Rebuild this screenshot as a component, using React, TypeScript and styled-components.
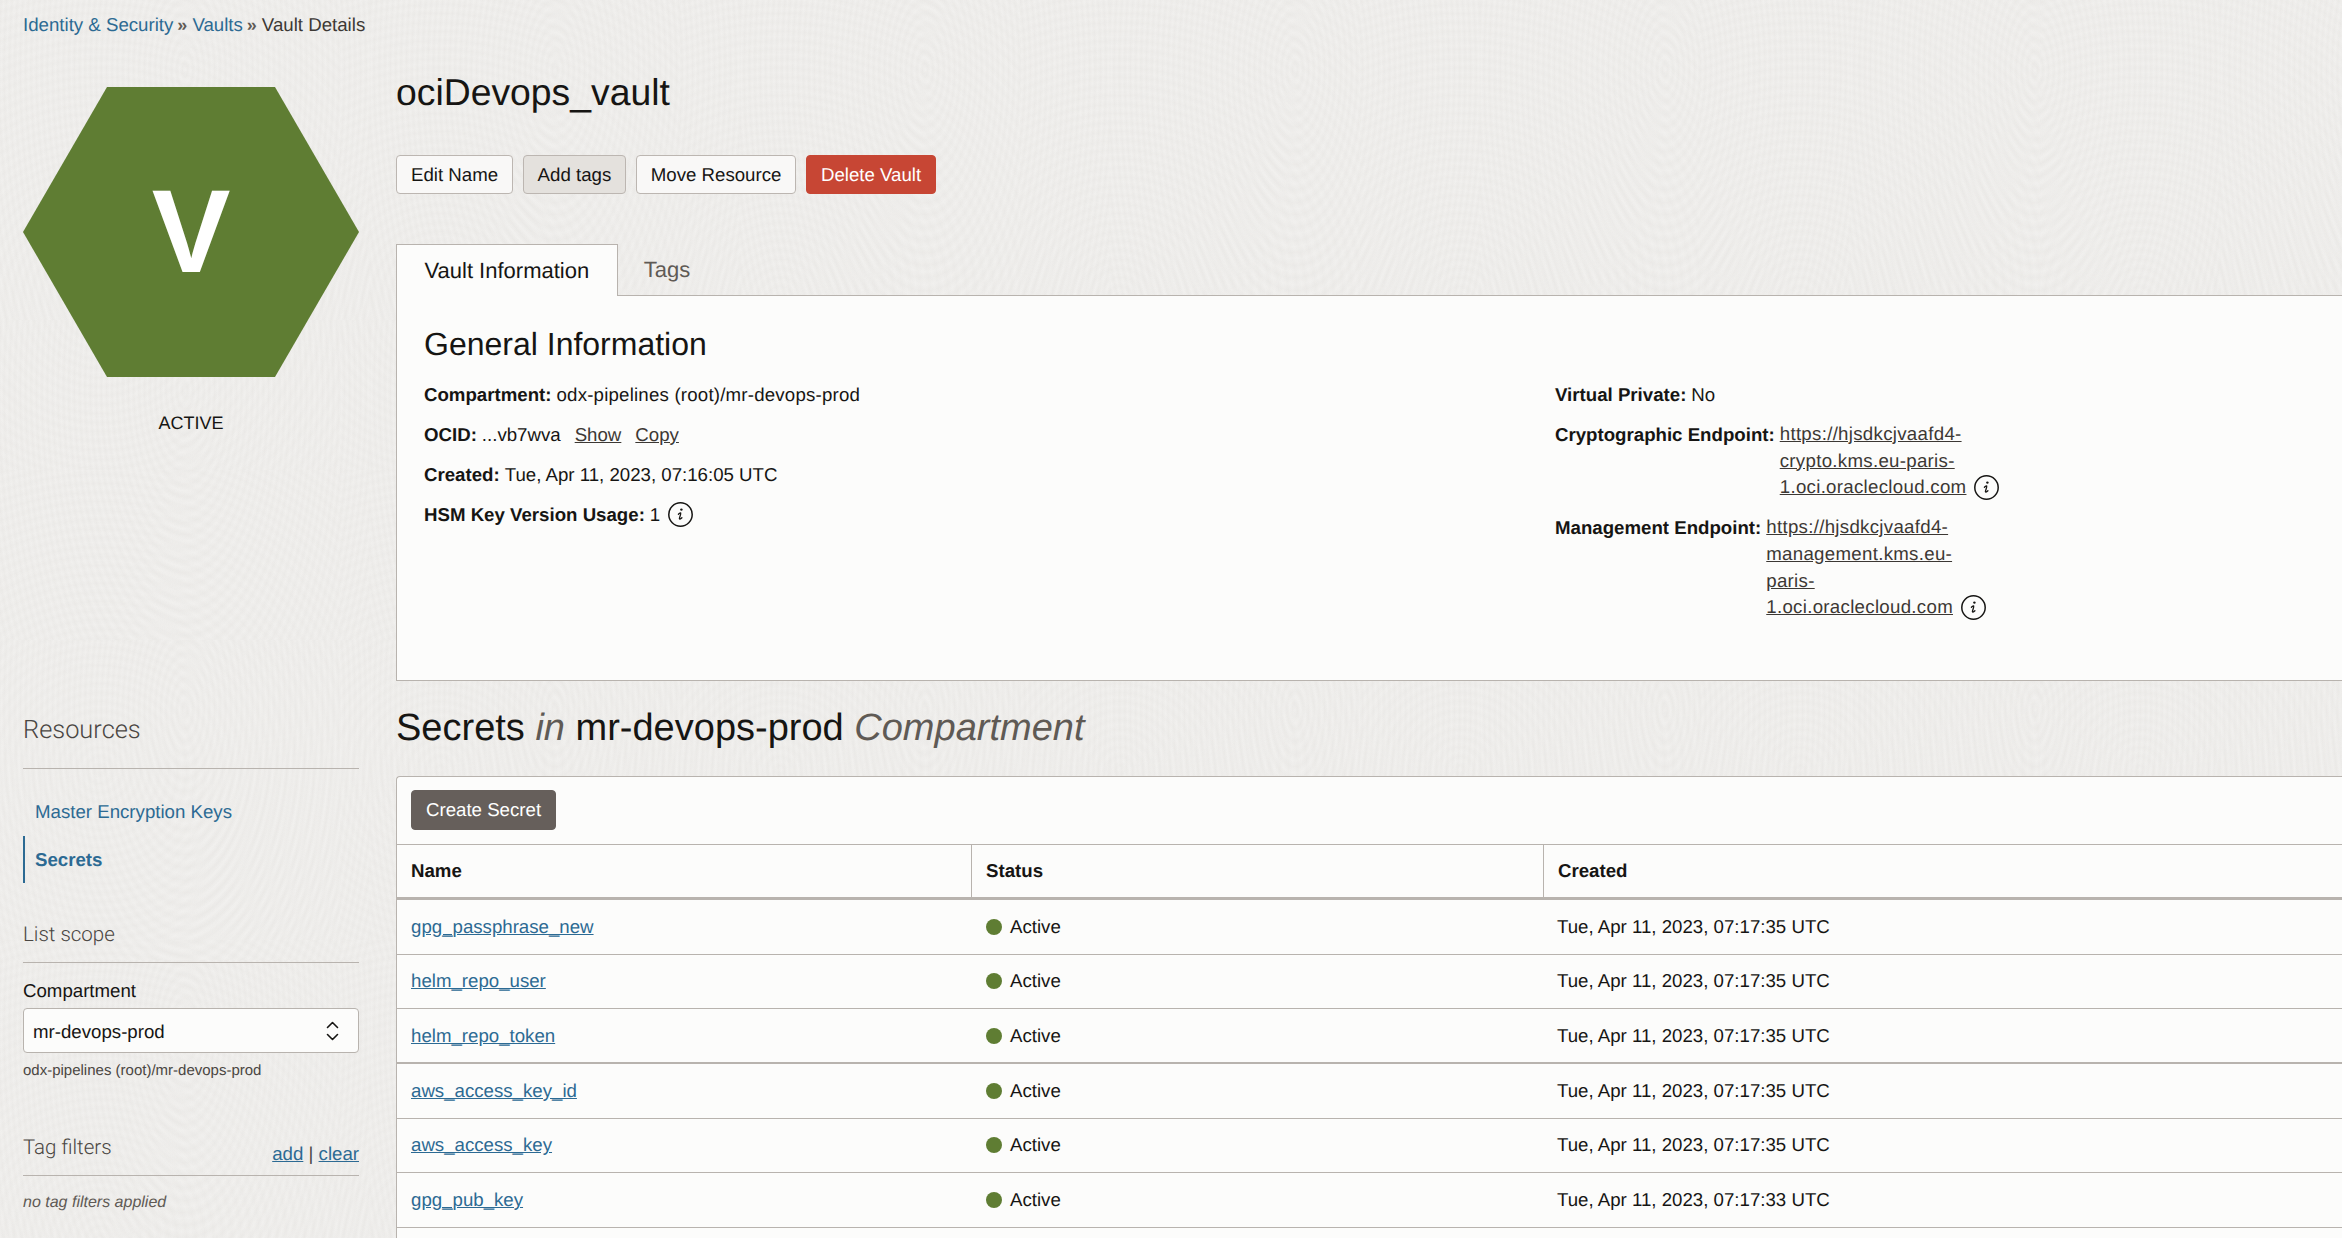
import React from "react";
import styled, { createGlobalStyle } from "styled-components";

const GlobalStyle = createGlobalStyle`
  html, body {
    margin: 0;
    height: 1238px;
    overflow: hidden;
    background: #f1f0ee;
  }
  * { box-sizing: border-box; }
`;

const Page = styled.div`
  height: 1238px;
  overflow: hidden;
  padding-left: 23px;
  color: #161513;
  font-family: "Liberation Sans", Arial, sans-serif;
  font-size: 18.67px;
  text-rendering: geometricPrecision;
  background-color: #f1f0ee;
  background-image:
    repeating-radial-gradient(ellipse 90px 210px at 185px 70px, rgba(90, 80, 70, 0) 0, rgba(90, 80, 70, 0.022) 3%, rgba(90, 80, 70, 0) 6%),
    repeating-radial-gradient(circle 130px at 100px 300px, rgba(90, 80, 70, 0) 0, rgba(90, 80, 70, 0.014) 3.5%, rgba(90, 80, 70, 0) 7%);
  background-size: 370px 320px, 340px 470px;
`;

const Breadcrumb = styled.nav`
  height: 48px;
  line-height: 50px;
  color: #3c3834;
  white-space: nowrap;
`;

const CrumbLink = styled.a`
  color: #2c6a93;
`;

const CrumbSep = styled.span`
  margin: 0 5px 0 4px;
  font-size: 18px;
  font-weight: 700;
  color: #5f5a55;
`;

const Columns = styled.div`
  display: flex;
  gap: 37px;
  width: 2360px;
`;

const Sidebar = styled.aside`
  flex: 0 0 336px;
  padding-top: 39px;
`;

const HexIcon = styled.svg`
  display: block;
  width: 336px;
  height: 290px;
`;

const HexLetter = styled.div`
  position: relative;
  height: 290px;
`;

const HexText = styled.span`
  position: absolute;
  inset: 0;
  display: flex;
  align-items: center;
  justify-content: center;
  padding-bottom: 1px;
  color: #fff;
  font-size: 118px;
  font-weight: 700;
  line-height: 1;
`;

const StateLabel = styled.div`
  margin-top: 34px;
  line-height: 24px;
  text-align: center;
  font-size: 18px;
`;

const SideHeading = styled.h3<{ $big?: boolean; $top: number }>`
  display: flex;
  justify-content: space-between;
  align-items: flex-end;
  margin: ${(p) => p.$top}px 0 0;
  padding-bottom: ${(p) => (p.$big ? 17 : 11)}px;
  border-bottom: 1px solid #b8b3ae;
  line-height: ${(p) => (p.$big ? 41 : 31)}px;
  font-family: Roboto, "Liberation Sans", sans-serif;
  font-size: ${(p) => (p.$big ? 25.4 : 20.5)}px;
  font-weight: 300;
  color: #4a4642;
`;

const FilterLinks = styled.span`
  font-family: "Liberation Sans", Arial, sans-serif;
  font-size: 18.67px;
  line-height: 24px;
  color: #4a4642;
  margin-bottom: -2px;

  a {
    color: #2c6a93;
    text-decoration: underline;
  }
`;

const Menu = styled.ul`
  list-style: none;
  margin: 19px 0 0;
  padding: 0;
`;

const MenuItem = styled.li<{ $active?: boolean }>`
  height: 47.5px;
  line-height: 47.5px;
  padding-left: 10px;
  border-left: 2px solid ${(p) => (p.$active ? "#2c6a93" : "transparent")};
  color: #2c6a93;
  font-weight: ${(p) => (p.$active ? 700 : 400)};
`;

const FieldLabel = styled.div`
  margin-top: 16px;
  line-height: 24px;
`;

const SelectBox = styled.div`
  display: flex;
  align-items: center;
  justify-content: space-between;
  height: 45px;
  margin-top: 5px;
  padding: 2px 19px 0 9px;
  background: #fcfcfb;
  border: 1px solid #b8b3ae;
  border-radius: 4px;
`;

const Chevrons = styled.svg`
  margin-top: -2px;
`;

const Helper = styled.div`
  margin-top: 8px;
  line-height: 20px;
  font-size: 15px;
  color: #4a4642;
`;

const EmptyNote = styled.div`
  margin-top: 17px;
  line-height: 20px;
  font-size: 16px;
  font-style: italic;
  color: #5f5a55;
`;

const Main = styled.main`
  flex: 1;
  min-width: 0;
`;

const Title = styled.h1`
  margin: 20px 0 0;
  line-height: 48px;
  font-size: 37.33px;
  font-weight: 400;
`;

const Actions = styled.div`
  display: flex;
  gap: 9.5px;
  margin-top: 39px;
`;

const Button = styled.button<{ $kind?: "hover" | "danger" | "dark" }>`
  height: ${(p) => (p.$kind === "dark" ? 40 : 39)}px;
  padding: 0 14px;
  border: 1px solid ${(p) => (p.$kind === "danger" ? "#c74634" : p.$kind === "dark" ? "#665f5b" : "#bcb6b1")};
  border-radius: 4px;
  background: ${(p) =>
    p.$kind === "danger" ? "#c74634" : p.$kind === "dark" ? "#665f5b" : p.$kind === "hover" ? "#e4e1dd" : "#f9f8f7"};
  color: ${(p) => (p.$kind === "danger" || p.$kind === "dark" ? "#fff" : "#161513")};
  font-family: inherit;
  font-size: 18.67px;
  text-rendering: geometricPrecision;
`;

const TabBar = styled.div`
  display: flex;
  margin-top: 50px;
  height: 52px;
  border-bottom: 1px solid #b8b3ae;
`;

const Tab = styled.div<{ $active?: boolean }>`
  height: 52px;
  line-height: 52px;
  padding: 0 26px;
  font-size: 22px;
  color: ${(p) => (p.$active ? "#161513" : "#5f5a55")};
  ${(p) =>
    p.$active &&
    `
    padding: 0 27.5px;
    background: #fcfcfb;
    border: 1px solid #b8b3ae;
    border-bottom: 0;
  `}
`;

const InfoPanel = styled.section`
  height: 385px;
  padding: 28px 27px 0;
  background: #fcfcfb;
  border: 1px solid #b8b3ae;
  border-width: 0 0 1px 1px;
`;

const SectionTitle = styled.h2`
  margin: 0;
  line-height: 40px;
  font-size: 32px;
  font-weight: 400;
`;

const InfoGrid = styled.div`
  display: grid;
  grid-template-columns: 1131px 1fr;
  margin-top: 17px;
`;

const InfoColumn = styled.div`
  display: flex;
  flex-direction: column;
  gap: 13px;
`;

const InfoRow = styled.div`
  display: flex;
  line-height: 27px;
  white-space: pre;
`;

const InfoLabel = styled.strong`
  font-weight: 700;
  margin-right: 5px;
`;

const PathValue = styled.span`
  letter-spacing: 0.2px;
`;

const PlainLink = styled.a`
  color: #3c3834;
  text-decoration: underline;
`;

const ShowLink = styled(PlainLink)`
  margin-left: 14px;
`;

const UrlBlock = styled.div`
  display: flex;
  flex-direction: column;
  align-items: flex-start;
  line-height: 26.7px;
  letter-spacing: 0.3px;
`;

const InfoMark = styled.svg`
  flex: none;
  width: 25px;
  height: 25px;
  margin: 1px 0 0 8px;
`;

const UrlLine = styled.div`
  display: flex;
`;

const ListTitle = styled.h2`
  margin: 23px 0 0;
  line-height: 48px;
  font-size: 38px;
  font-weight: 400;

  em {
    color: #5f5a55;
  }
`;

const ListCard = styled.section`
  margin-top: 24px;
  height: 600px;
  background: #fcfcfb;
  border: 1px solid #b8b3ae;
  border-width: 1px 0 0 1px;
  border-top-left-radius: 4px;
`;

const Toolbar = styled.div`
  height: 68px;
  padding: 13px 14px 0;
  border-bottom: 1px solid #b8b3ae;
`;

const Row = styled.div<{ $head?: boolean }>`
  display: grid;
  grid-template-columns: 574px 572px 1fr;
  align-items: center;
  height: ${(p) => (p.$head ? 55 : 54.67)}px;
  border-bottom: ${(p) => (p.$head ? 3 : 1)}px solid #b8b3ae;
  &:nth-child(5) {
    border-bottom-width: 2px;
  }
`;

const HeadCell = styled.div`
  height: 100%;
  display: flex;
  align-items: center;
  padding-left: 14px;
  font-weight: 700;
  & + & {
    border-left: 1px solid #b8b3ae;
  }
`;

const Cell = styled.div`
  display: flex;
  align-items: center;
  gap: 8px;
  padding-left: 14px;
`;

const NameLink = styled.a`
  color: #2c6a93;
  text-decoration: underline;
`;

const StatusDot = styled.span`
  width: 16px;
  height: 16px;
  margin-left: 1px;
  border-radius: 50%;
  background: #5f7d33;
`;

const secrets = [
  { name: "gpg_passphrase_new", created: "Tue, Apr 11, 2023, 07:17:35 UTC" },
  { name: "helm_repo_user", created: "Tue, Apr 11, 2023, 07:17:35 UTC" },
  { name: "helm_repo_token", created: "Tue, Apr 11, 2023, 07:17:35 UTC" },
  { name: "aws_access_key_id", created: "Tue, Apr 11, 2023, 07:17:35 UTC" },
  { name: "aws_access_key", created: "Tue, Apr 11, 2023, 07:17:35 UTC" },
  { name: "gpg_pub_key", created: "Tue, Apr 11, 2023, 07:17:33 UTC" },
];

const InfoIcon = () => (
  <InfoMark viewBox="0 0 25 25" fill="none" stroke="#161513">
    <circle cx="12.5" cy="12.5" r="11.7" strokeWidth="1.5" />
    <circle cx="13.4" cy="7.6" r="1.2" fill="#161513" stroke="none" />
    <path d="M10.4 12.2c1-1 2.2-1.6 2.4-.9.2.6-1.5 4.6-1.4 5.4.1.8 1.5.1 2.5-1" strokeWidth="1.3" strokeLinecap="round" />
  </InfoMark>
);

const App = () => (
  <Page>
    <GlobalStyle />
    <Breadcrumb>
      <CrumbLink>Identity &amp; Security</CrumbLink>
      <CrumbSep>»</CrumbSep>
      <CrumbLink>Vaults</CrumbLink>
      <CrumbSep>»</CrumbSep>
      Vault Details
    </Breadcrumb>
    <Columns>
      <Sidebar>
        <HexLetter>
          <HexIcon viewBox="0 0 336 290">
            <polygon points="84,0 252,0 336,145 252,290 84,290 0,145" fill="#5f7d33" />
          </HexIcon>
          <HexText>V</HexText>
        </HexLetter>
        <StateLabel>ACTIVE</StateLabel>
        <SideHeading $big $top={275}>Resources</SideHeading>
        <Menu>
          <MenuItem>Master Encryption Keys</MenuItem>
          <MenuItem $active>Secrets</MenuItem>
        </Menu>
        <SideHeading $top={37}>List scope</SideHeading>
        <FieldLabel>Compartment</FieldLabel>
        <SelectBox>
          mr-devops-prod
          <Chevrons width="13" height="20" viewBox="0 0 13 20" fill="none" stroke="#161513" strokeWidth="1.6" strokeLinecap="round" strokeLinejoin="round">
            <path d="M1.5 6.5 6.5 1.5l5 5" />
            <path d="M1.5 13.5l5 5 5-5" />
          </Chevrons>
        </SelectBox>
        <Helper>odx-pipelines (root)/mr-devops-prod</Helper>
        <SideHeading $top={52}>
          Tag filters
          <FilterLinks>
            <a>add</a> | <a>clear</a>
          </FilterLinks>
        </SideHeading>
        <EmptyNote>no tag filters applied</EmptyNote>
      </Sidebar>
      <Main>
        <Title>ociDevops_vault</Title>
        <Actions>
          <Button>Edit Name</Button>
          <Button $kind="hover">Add tags</Button>
          <Button>Move Resource</Button>
          <Button $kind="danger">Delete Vault</Button>
        </Actions>
        <TabBar>
          <Tab $active>Vault Information</Tab>
          <Tab>Tags</Tab>
        </TabBar>
        <InfoPanel>
          <SectionTitle>General Information</SectionTitle>
          <InfoGrid>
            <InfoColumn>
              <InfoRow>
                <InfoLabel>Compartment:</InfoLabel><PathValue>odx-pipelines (root)/mr-devops-prod</PathValue>
              </InfoRow>
              <InfoRow>
                <InfoLabel>OCID:</InfoLabel>...vb7wva<ShowLink>Show</ShowLink><ShowLink>Copy</ShowLink>
              </InfoRow>
              <InfoRow>
                <InfoLabel>Created:</InfoLabel>Tue, Apr 11, 2023, 07:16:05 UTC
              </InfoRow>
              <InfoRow>
                <InfoLabel>HSM Key Version Usage:</InfoLabel>1<InfoIcon />
              </InfoRow>
            </InfoColumn>
            <InfoColumn>
              <InfoRow>
                <InfoLabel>Virtual Private:</InfoLabel>No
              </InfoRow>
              <InfoRow>
                <InfoLabel>Cryptographic Endpoint:</InfoLabel>
                <UrlBlock>
                  <PlainLink>https://hjsdkcjvaafd4-</PlainLink>
                  <PlainLink>crypto.kms.eu-paris-</PlainLink>
                  <UrlLine><PlainLink>1.oci.oraclecloud.com</PlainLink><InfoIcon /></UrlLine>
                </UrlBlock>
              </InfoRow>
              <InfoRow>
                <InfoLabel>Management Endpoint:</InfoLabel>
                <UrlBlock>
                  <PlainLink>https://hjsdkcjvaafd4-</PlainLink>
                  <PlainLink>management.kms.eu-</PlainLink>
                  <PlainLink>paris-</PlainLink>
                  <UrlLine><PlainLink>1.oci.oraclecloud.com</PlainLink><InfoIcon /></UrlLine>
                </UrlBlock>
              </InfoRow>
            </InfoColumn>
          </InfoGrid>
        </InfoPanel>
        <ListTitle>
          Secrets <em>in</em> mr-devops-prod <em>Compartment</em>
        </ListTitle>
        <ListCard>
          <Toolbar>
            <Button $kind="dark">Create Secret</Button>
          </Toolbar>
          <Row $head>
            <HeadCell>Name</HeadCell>
            <HeadCell>Status</HeadCell>
            <HeadCell>Created</HeadCell>
          </Row>
          {secrets.map((s) => (
            <Row key={s.name}>
              <Cell><NameLink>{s.name}</NameLink></Cell>
              <Cell><StatusDot />Active</Cell>
              <Cell>{s.created}</Cell>
            </Row>
          ))}
        </ListCard>
      </Main>
    </Columns>
  </Page>
);

export default App;
